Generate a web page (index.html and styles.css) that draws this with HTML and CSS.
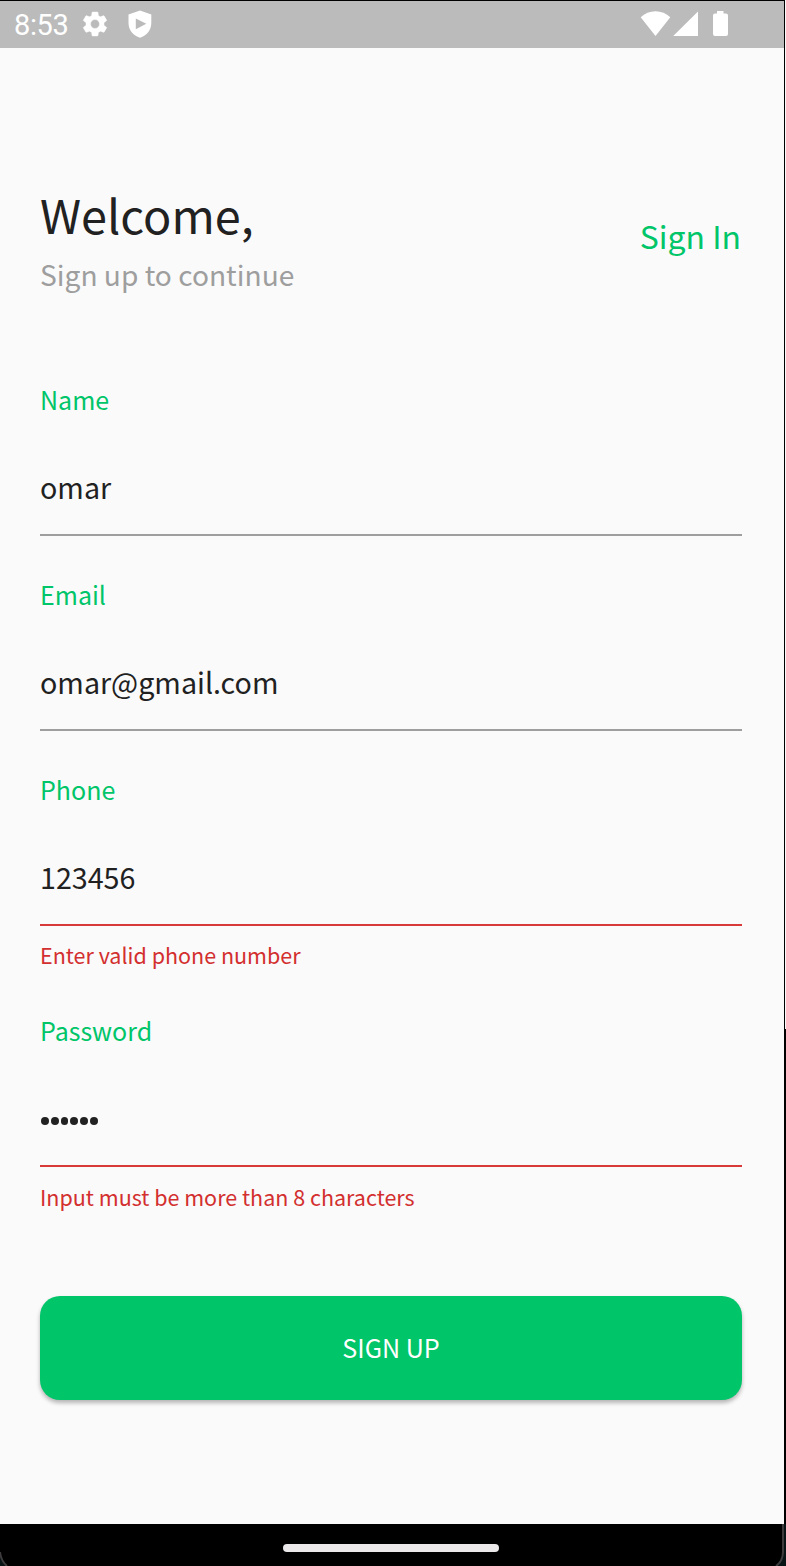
FILE: index.html
```html
<!DOCTYPE html>
<html lang="en">
<head>
<meta charset="utf-8">
<meta name="viewport" content="width=device-width">
<title>Sign Up</title>
<link rel="stylesheet" href="styles.css">
</head>
<body>
<div class="device">
  <header class="status">
    <div class="status-left">
      <span class="clock">8:53</span>
      <svg class="gear" width="30" height="30" viewBox="0 0 24 24"><path d="M19.14 12.94c.04-.3.06-.61.06-.94 0-.32-.02-.64-.07-.94l2.03-1.58a.49.49 0 0 0 .12-.61l-1.92-3.32a.488.488 0 0 0-.59-.22l-2.39.96c-.5-.38-1.03-.7-1.62-.94l-.36-2.54a.484.484 0 0 0-.48-.41h-3.84c-.24 0-.43.17-.47.41l-.36 2.54c-.59.24-1.13.57-1.62.94l-2.39-.96c-.22-.08-.47 0-.59.22L2.74 8.87c-.12.21-.08.47.12.61l2.03 1.58c-.05.3-.09.63-.09.94s.02.64.07.94l-2.03 1.58a.49.49 0 0 0-.12.61l1.92 3.32c.12.22.37.29.59.22l2.39-.96c.5.38 1.03.7 1.62.94l.36 2.54c.05.24.24.41.48.41h3.84c.24 0 .44-.17.47-.41l.36-2.54c.59-.24 1.13-.56 1.62-.94l2.39.96c.22.08.47 0 .59-.22l1.92-3.32c.12-.22.07-.47-.12-.61l-2.01-1.58zM12 15.6c-1.98 0-3.6-1.62-3.6-3.6s1.62-3.6 3.6-3.6 3.6 1.62 3.6 3.6-1.62 3.6-3.6 3.6z"/></svg>
      <svg class="shield" width="24" height="28" viewBox="0 0 24 28"><path fill-rule="evenodd" d="M12 .5 23.3 4.6V13c0 7-4.500 12.500-11.300 14.800C5.200 25.500.5 20 .5 13V4.600ZM7.800 8.500V19.200L18.300 13.800Z"/></svg>
    </div>
    <svg class="signals" width="90" height="28" viewBox="0 0 90 28"><path d="M.7 7.300C8.500-.8 22.500-.8 30.300 7.300L15.500 26Z"/><path d="M58 1.500V26H33.200Z"/><path d="M77 1h6.500v2.500H86a2 2 0 0 1 2 2V24a2 2 0 0 1-2 2H75a2 2 0 0 1-2-2V5.500a2 2 0 0 1 2-2h2Z"/></svg>
  </header>
  <main class="screen">
    <div class="heading">
      <div>
        <h1 class="title">Welcome,</h1>
        <p class="subtitle">Sign up to continue</p>
      </div>
      <a class="signin">Sign In</a>
    </div>
    <form class="form">
      <div class="field"><label class="label">Name</label><div class="value">omar</div></div>
      <div class="field"><label class="label">Email</label><div class="value">omar@gmail.com</div></div>
      <div class="field invalid"><label class="label">Phone</label><div class="value">123456</div><p class="error phone-error">Enter valid phone number</p></div>
      <div class="field invalid"><label class="label">Password</label><div class="value dots"><i></i><i></i><i></i><i></i><i></i><i></i></div><p class="error">Input must be more than 8 characters</p></div>
    </form>
    <button class="submit" type="button">SIGN UP</button>
  </main>
  <footer class="nav">
    <svg class="frame" width="786" height="42" viewBox="0 0 786 42"><path class="outside" d="M0 29Q1 38 7 42H0ZM784 0H786V42H776Q784 37 784 28Z"/><path class="edge" d="M0 28Q1 37 7 42M783 0V28Q783 37 776 42"/></svg>
    <span class="handle"></span>
  </footer>
</div>
</body>
</html>
```
FILE: styles.css
```css
* { box-sizing: border-box; }
body { margin: 0; background: #fafafa; font-family: "Noto Sans CJK SC", "Noto Sans", sans-serif; color: #212121; }
h1, p { margin: 0; font-weight: 400; }
.device { position: relative; width: 786px; height: 1566px; display: flex; flex-direction: column; overflow: hidden; }
.device::before { content: ""; position: absolute; left: 784px; top: 0; width: 1px; height: 1524px; background: #000; }
.device::after { content: ""; position: absolute; left: 785px; top: 0; width: 1px; height: 1524px; background: linear-gradient(#fafafa 1029px, #000 1029px); }
.status { height: 48px; flex: none; border-top: 1px solid #000; background: #bbb; display: flex; justify-content: space-between; padding: 0 56px 2px 14px; align-items: center; }
.status svg { fill: #fff; display: block; }
.status .gear { stroke: #fff; stroke-width: .35; }
.status-left { display: flex; align-items: center; }
.clock { font: 29px/44px Roboto, sans-serif; color: #fff; width: 66px; letter-spacing: -.4px; padding-top: 2px; }
.shield { margin-left: 18px; }
.screen { flex: 1; padding: 142px 44px 0 40px; display: flex; flex-direction: column; }
.heading { display: flex; justify-content: space-between; height: 189px; }
.title { font-size: 46.800px; line-height: 46px; height: 66px; padding-top: 1px; white-space: nowrap; }
.subtitle { font-size: 28.150px; line-height: 36px; color: #9e9e9e; white-space: nowrap; }
.signin { font-size: 31.900px; line-height: 50px; color: #00c569; padding-top: 20px; margin-right: 1px; white-space: nowrap; }
.form { display: flex; flex-direction: column; gap: 38px; }
.label { display: block; font-size: 25px; line-height: 40px; color: #00c569; height: 84px; }
.value { font-size: 28.650px; line-height: 44px; height: 73px; padding-top: 2px; border-bottom: 2px solid #9e9e9e; }
.invalid .value { border-color: #d83a3a; }
.error { color: #d32f2f; font-size: 21.500px; line-height: 30px; height: 46px; padding-top: 15px; }
.phone-error { padding-top: 14px; }
.value.dots { display: flex; gap: 1.900px; padding: 23.400px 0 0 1px; }
.dots i { width: 7.900px; height: 7.900px; border-radius: 50%; background: #212121; }
.submit { margin-top: 82.600px; height: 104px; width: 702px; border: 0; border-radius: 20px; background: #00c569; color: #fff; font: 25.100px/40px "Noto Sans CJK SC", "Noto Sans", sans-serif; padding-bottom: 3px; box-shadow: 0 3px 4px rgba(0,0,0,.28); }
.nav { position: relative; flex: none; height: 42px; background: #000; display: flex; justify-content: center; padding: 20px 4.500px 0 0; }
.frame { position: absolute; left: 0; top: 0; }
.outside { fill: #071315; }
.edge { fill: none; stroke: #3d3b3c; stroke-width: 2; }
.handle { width: 216px; height: 8px; border-radius: 4px; background: #ebe9ea; }
```
